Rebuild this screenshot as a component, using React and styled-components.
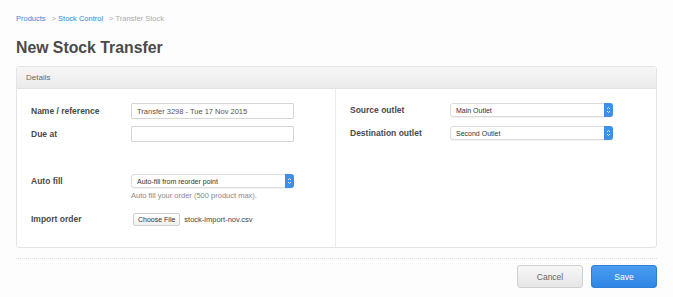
import React from "react";
import styled, { createGlobalStyle } from "styled-components";

const GlobalStyle = createGlobalStyle`
  body {
    margin: 0;
    background: #fdfdfd;
    font-family: "Liberation Sans", Arial, sans-serif;
    color: #444;
  }
`;

const Page = styled.div`
  width: 641px;
  padding: 13px 16px 0 16px;
`;

const Breadcrumb = styled.div`
  display: flex;
  gap: 6px;
  font-size: 7.5px;
  line-height: 12px;
  color: #aaa;
`;

const Crumb = styled.span`
  color: ${(p) => (p.$current ? "#aaa" : "#3a87d8")};
`;

const Title = styled.h1`
  margin: 13px 0 0 0;
  font-size: 15.8px;
  line-height: 20px;
  font-weight: bold;
  color: #4a4a4a;
`;

const Panel = styled.div`
  margin-top: 8px;
  border: 1px solid #e4e4e4;
  border-radius: 3px;
  background: #fff;
  height: 180px;
  display: flex;
  flex-direction: column;
`;

const PanelHeader = styled.div`
  height: 21px;
  padding-left: 9px;
  display: flex;
  align-items: center;
  font-size: 8px;
  color: #6a6a6a;
  background: linear-gradient(#f6f6f6, #ececec);
  border-bottom: 1px solid #e2e2e2;
`;

const Columns = styled.div`
  flex: 1;
  display: grid;
  grid-template-columns: 319px 1fr;
`;

const Column = styled.div`
  padding: 14px 14px 0 14px;
  border-right: ${(p) => (p.$divider ? "1px solid #ececec" : "none")};
  display: flex;
  flex-direction: column;
`;

const Row = styled.div`
  display: grid;
  grid-template-columns: 100px 163px;
  align-items: ${(p) => (p.$top ? "start" : "center")};
  margin-top: ${(p) => p.$gap || 0}px;
`;

const Label = styled.label`
  font-size: 8.5px;
  font-weight: bold;
  color: #4a4a4a;
  line-height: ${(p) => p.$lh || "16px"};
`;

const TextInput = styled.input`
  box-sizing: border-box;
  height: 16px;
  width: 163px;
  border: 1px solid #d6d6d6;
  border-radius: 1px;
  padding: 0 5px;
  font-family: inherit;
  font-size: 7.5px;
  color: #555;
  background: #fff;
  outline: none;
`;

const SelectBox = styled.div`
  box-sizing: border-box;
  height: ${(p) => p.$h || 14}px;
  width: 163px;
  border: 1px solid #dcdcdc;
  border-radius: 3px;
  display: flex;
  align-items: center;
  background: #fff;
  box-shadow: 0 1px 1px rgba(0, 0, 0, 0.06);
`;

const SelectText = styled.span`
  flex: 1;
  padding-left: 5px;
  font-size: 7px;
  color: #333;
`;

const SelectArrow = styled.span`
  width: 9px;
  align-self: stretch;
  margin: -1px -1px -1px 0;
  background: #3d8fe8;
  border-radius: 0 3px 3px 0;
  display: flex;
  align-items: center;
  justify-content: center;
`;

const Help = styled.div`
  grid-column: 2;
  margin-top: 3px;
  font-size: 7.5px;
  color: #888;
`;

const FileWrap = styled.div`
  display: flex;
  align-items: center;
  gap: 4px;
  padding-left: 2px;
  font-size: 7.5px;
  color: #444;
`;

const FileButton = styled.span`
  height: 11px;
  padding: 0 4px;
  border: 1px solid #cfcfcf;
  border-radius: 2px;
  background: linear-gradient(#fff, #f0f0f0);
  font-size: 7px;
  color: #333;
  display: flex;
  align-items: center;
`;

const Footer = styled.div`
  margin-top: 10px;
  border-top: 1px dotted #ddd;
  padding-top: 6px;
  display: flex;
  justify-content: flex-end;
  gap: 8px;
`;

const Button = styled.button`
  width: 66px;
  height: 23px;
  border-radius: 3px;
  font-family: inherit;
  font-size: 8.5px;
  cursor: pointer;
  border: 1px solid ${(p) => (p.$primary ? "#2f7fd6" : "#cfcfcf")};
  color: ${(p) => (p.$primary ? "#fff" : "#666")};
  background: ${(p) =>
    p.$primary
      ? "linear-gradient(#4a9cf0, #2f86e4)"
      : "linear-gradient(#f7f7f7, #e6e6e6)"};
`;

const Arrows = () => (
  <svg width="5" height="8" viewBox="0 0 5 8">
    <path d="M1 3 L2.5 1.5 L4 3 M1 5 L2.5 6.5 L4 5" stroke="#fff" strokeWidth="0.8" fill="none" />
  </svg>
);

const Select = ({ value, h }) => (
  <SelectBox $h={h}>
    <SelectText>{value}</SelectText>
    <SelectArrow>
      <Arrows />
    </SelectArrow>
  </SelectBox>
);

export default function App() {
  return (
    <Page>
      <GlobalStyle />
      <Breadcrumb>
        <Crumb>Products</Crumb>
        <span>
          &gt; <Crumb>Stock Control</Crumb>
        </span>
        <span>
          &gt; <Crumb $current>Transfer Stock</Crumb>
        </span>
      </Breadcrumb>
      <Title>New Stock Transfer</Title>
      <Panel>
        <PanelHeader>Details</PanelHeader>
        <Columns>
          <Column $divider>
            <Row>
              <Label>Name / reference</Label>
              <TextInput defaultValue="Transfer 3298 - Tue 17 Nov 2015" />
            </Row>
            <Row $gap={7}>
              <Label>Due at</Label>
              <TextInput />
            </Row>
            <Row $gap={32} $top>
              <Label $lh="14px">Auto fill</Label>
              <Select value="Auto-fill from reorder point" />
              <Help>Auto fill your order (500 product max).</Help>
            </Row>
            <Row $gap={11}>
              <Label>Import order</Label>
              <FileWrap>
                <FileButton>Choose File</FileButton>
                stock-import-nov.csv
              </FileWrap>
            </Row>
          </Column>
          <Column>
            <Row>
              <Label $lh="14px">Source outlet</Label>
              <Select value="Main Outlet" />
            </Row>
            <Row $gap={9}>
              <Label $lh="14px">Destination outlet</Label>
              <Select value="Second Outlet" />
            </Row>
          </Column>
        </Columns>
      </Panel>
      <Footer>
        <Button>Cancel</Button>
        <Button $primary>Save</Button>
      </Footer>
    </Page>
  );
}
